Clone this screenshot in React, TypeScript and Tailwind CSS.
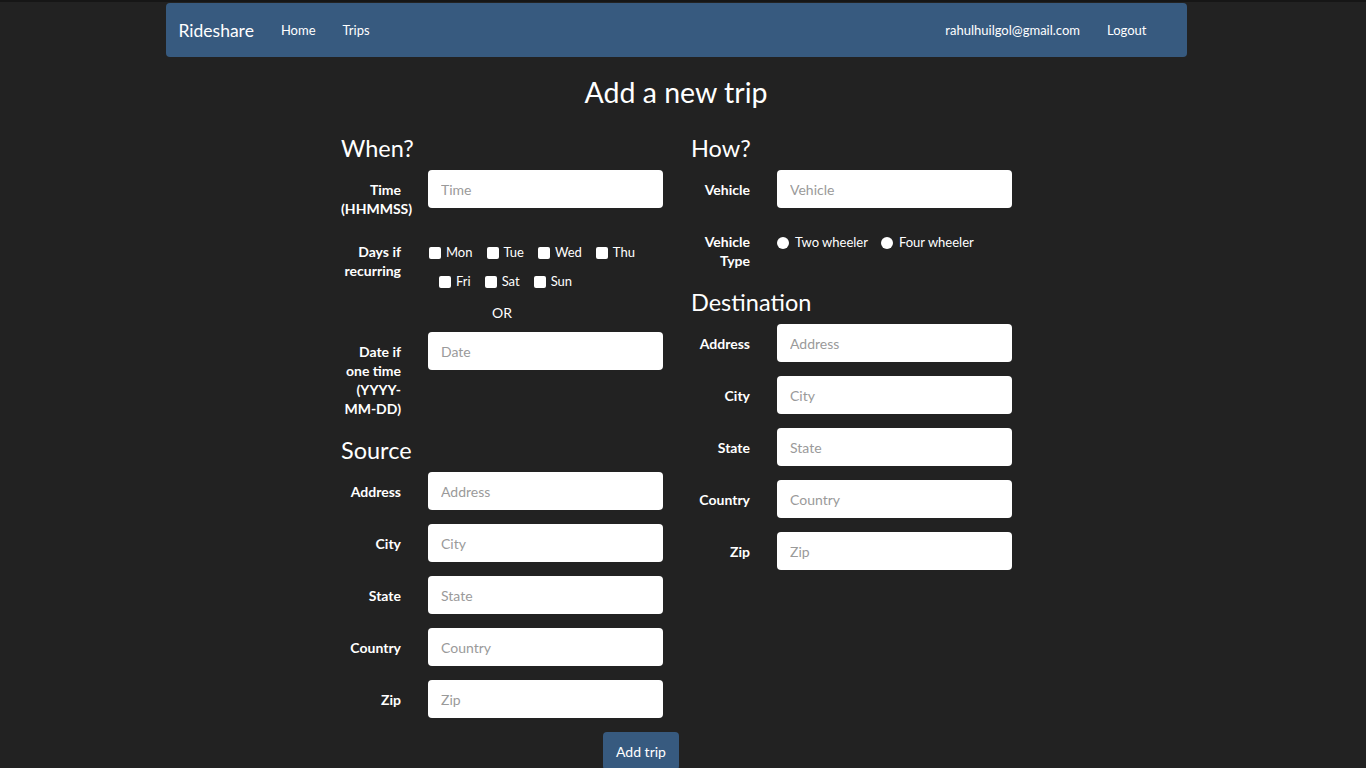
import React from 'react';

const FONT = { fontFamily: 'Lato, "Open Sans", "Liberation Sans", sans-serif' };

function Field({ label, placeholder }: { label: string; placeholder: string }) {
  return (
    <div className="flex items-start mt-[14px] first:mt-[7px]">
      <label className="w-[60px] shrink-0 pt-[10px] text-right text-[14px] leading-[19px] font-bold text-white">
        {label}
      </label>
      <input
        type="text"
        placeholder={placeholder}
        className="ml-[27px] w-[235px] h-[38px] rounded-[4px] bg-white px-[13px] text-[14px] text-[#464545] placeholder:text-[#9a9a9a] outline-none"
      />
    </div>
  );
}

function Check({ day }: { day: string }) {
  return (
    <label className="flex items-center text-[13px] text-white">
      <input type="checkbox" className="appearance-none w-[12px] h-[12px] rounded-[2px] bg-white" />
      <span className="ml-[5px]">{day}</span>
    </label>
  );
}

function Radio({ text }: { text: string }) {
  return (
    <label className="flex items-center text-[13px] text-white">
      <input type="radio" name="vtype" className="appearance-none w-[12px] h-[12px] rounded-full bg-white" />
      <span className="ml-[6px]">{text}</span>
    </label>
  );
}

function Heading({ children, first }: { children: React.ReactNode; first?: boolean }) {
  return (
    <h2 className={`${first ? 'mt-[24px]' : 'mt-[18px]'} h-[29px] leading-[29px] text-[23.5px] text-white`}>
      {children}
    </h2>
  );
}

export default function App() {
  return (
    <div className="min-h-screen bg-[#222222] pb-[24px]" style={FONT}>
      <div className="h-[2px] bg-[#161616]" />
      {/* page area excludes the 14px scrollbar gutter of the original */}
      <div className="w-[1352px]">
        <nav className="mt-[1px] mx-auto w-[1021px] h-[54px] rounded-[4px] bg-[#375a7f] flex items-center pt-[2px] pl-[13px] pr-[40px] text-white">
          <span className="text-[17.5px]">Rideshare</span>
          <span className="ml-[27px] text-[13px]">Home</span>
          <span className="ml-[27px] text-[13px]">Trips</span>
          <span className="ml-auto text-[13px]">rahulhuilgol@gmail.com</span>
          <span className="ml-[27px] text-[13px]">Logout</span>
        </nav>

        <h1 className="mt-[17px] h-[36px] leading-[36px] text-center text-[28.5px] text-white">Add a new trip</h1>

        <div className="ml-[341px] w-[671px]">
          <div className="grid grid-cols-[322px_322px] gap-x-[27px]">
            {/* left column */}
            <div>
              <Heading first>When?</Heading>
              <div>
                <Field label="Time (HHMMSS)" placeholder="Time" />
                <div className="flex items-start mt-[14px]">
                  <label className="w-[60px] shrink-0 pt-[10px] text-right text-[14px] leading-[19px] font-bold text-white">
                    Days if recurring
                  </label>
                  <div className="ml-[28px] pt-[6px]">
                    <div className="h-[29px] flex items-center gap-[14px]">
                      <Check day="Mon" />
                      <Check day="Tue" />
                      <Check day="Wed" />
                      <Check day="Thu" />
                    </div>
                    <div className="h-[29px] flex items-center gap-[14px] pl-[10px]">
                      <Check day="Fri" />
                      <Check day="Sat" />
                      <Check day="Sun" />
                    </div>
                  </div>
                </div>
                <div className="mt-[7px] h-[19px] leading-[19px] text-center text-[14px] text-white">OR</div>
                <div className="flex items-start mt-[10px]">
                  <label className="w-[60px] shrink-0 pt-[10px] text-right text-[14px] leading-[19px] font-bold text-white">
                    Date if one time (YYYY-MM-DD)
                  </label>
                  <input
                    type="text"
                    placeholder="Date"
                    className="ml-[27px] w-[235px] h-[38px] rounded-[4px] bg-white px-[13px] text-[14px] text-[#464545] placeholder:text-[#9a9a9a] outline-none"
                  />
                </div>
              </div>

              <Heading>Source</Heading>
              <div>
                <Field label="Address" placeholder="Address" />
                <Field label="City" placeholder="City" />
                <Field label="State" placeholder="State" />
                <Field label="Country" placeholder="Country" />
                <Field label="Zip" placeholder="Zip" />
              </div>
            </div>

            {/* right column */}
            <div className="pl-px">
              <Heading first>How?</Heading>
              <div className="-ml-px">
                <Field label="Vehicle" placeholder="Vehicle" />
                <div className="flex items-start mt-[14px]">
                  <label className="w-[60px] shrink-0 pt-[10px] text-right text-[14px] leading-[19px] font-bold text-white">
                    Vehicle Type
                  </label>
                  <div className="ml-[27px] pt-[6px] h-[29px] box-content flex items-center gap-[13px]">
                    <Radio text="Two wheeler" />
                    <Radio text="Four wheeler" />
                  </div>
                </div>
              </div>

              <Heading>Destination</Heading>
              <div className="-ml-px">
                <Field label="Address" placeholder="Address" />
                <Field label="City" placeholder="City" />
                <Field label="State" placeholder="State" />
                <Field label="Country" placeholder="Country" />
                <Field label="Zip" placeholder="Zip" />
              </div>
            </div>
          </div>

          <button className="mt-[14px] ml-[262px] w-[76px] h-[38px] rounded-[4px] bg-[#375a7f] text-[14px] text-white">
            Add trip
          </button>
        </div>
      </div>
    </div>
  );
}
